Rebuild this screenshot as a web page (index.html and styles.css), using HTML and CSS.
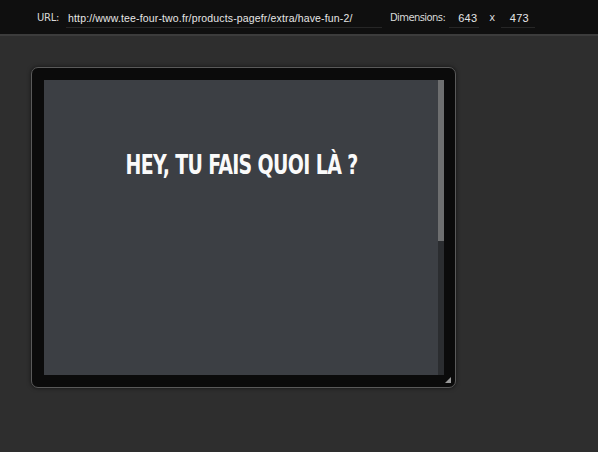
FILE: index.html
```html
<!DOCTYPE html>
<html>
<head>
<meta charset="utf-8">
<link rel="stylesheet" href="styles.css">
</head>
<body>
<div class="topbar">
  <span class="label url-label">URL:</span>
  <span class="field url-field">http://www.tee-four-two.fr/products-pagefr/extra/have-fun-2/</span>
  <span class="label dim-label">Dimensions:</span>
  <span class="field num">643</span>
  <span class="label times">x</span>
  <span class="field num">473</span>
</div>
<div class="stage">
  <div class="frame">
    <div class="viewport">
      <div class="content">
        <h1 class="headline">HEY, TU FAIS QUOI LÀ ?</h1>
      </div>
      <div class="scrollbar"><div class="thumb"></div></div>
    </div>
    <div class="grip"></div>
  </div>
</div>
</body>
</html>
```
FILE: styles.css
```css
html, body {
  margin: 0;
  padding: 0;
}
body {
  background: #2e2e2e;
  font-family: "Liberation Sans", sans-serif;
  width: 598px;
  height: 452px;
  overflow: hidden;
}
.topbar {
  height: 34px;
  background: #0f0f0f;
  border-bottom: 2px solid #3c3c3c;
  display: flex;
  align-items: center;
  padding-left: 37px;
  font-size: 10px;
  color: #d8d8d8;
  white-space: nowrap;
}
.label {
  font-family: "DejaVu Sans", sans-serif;
  font-size: 10px;
  letter-spacing: -0.3px;
}
.field {
  font-family: "Liberation Sans", sans-serif;
  font-size: 11px;
  color: #e6e6e6;
  border-bottom: 1px solid #262626;
  padding: 2px 2px 3px;
  margin-top: 4px;
  box-sizing: border-box;
}
.url-field {
  margin-left: 7px;
  width: 316px;
  font-size: 10.5px;
  letter-spacing: 0.15px;
}
.dim-label {
  margin-left: 8px;
  letter-spacing: -0.6px;
}
.num {
  margin-left: 4px;
  width: 30px;
  padding-left: 9px;
  letter-spacing: 0.3px;
}
.times {
  margin-left: 10px;
  margin-right: 6px;
}
.times + .num {
  margin-left: 0;
  padding-left: 9px;
  width: 34px;
}
.stage {
  padding: 31px 0 0 31px;
}
.frame {
  position: relative;
  width: 400px;
  height: 295px;
  padding: 12px 11px 12px 12px;
  background: #0b0b0b;
  border: 1px solid #5a5a5a;
  border-radius: 7px;
  box-shadow: 0 0 4px rgba(0,0,0,0.6);
}
.viewport {
  display: flex;
  width: 400px;
  height: 295px;
  background: #3c3f44;
}
.content {
  flex: 1;
  display: flex;
  justify-content: center;
}
.headline {
  margin: 71px 0 0 0;
  font-family: "DejaVu Sans Condensed", "DejaVu Sans", sans-serif;
  font-weight: bold;
  font-size: 27px;
  color: #fafafa;
  letter-spacing: -0.8px;
  transform: scaleX(0.78);
  line-height: 28px;
  padding-left: 2px;
}
.scrollbar {
  width: 6px;
  background: #2b2d30;
}
.thumb {
  height: 161px;
  background: #6e6f70;
}
.grip {
  position: absolute;
  right: 4px;
  bottom: 4px;
  width: 0;
  height: 0;
  border-left: 6px solid transparent;
  border-bottom: 6px solid #9a9a9a;
}
```
